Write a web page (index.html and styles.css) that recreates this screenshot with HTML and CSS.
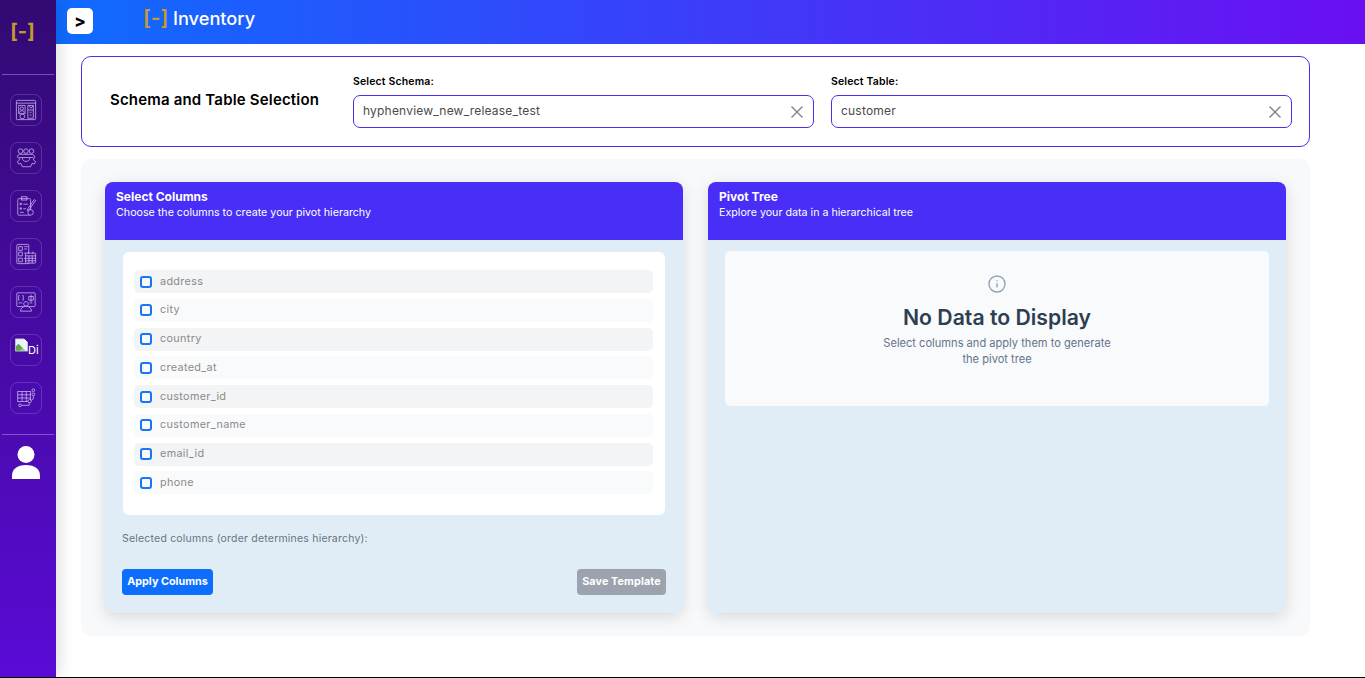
FILE: index.html
```html
<!DOCTYPE html>
<html lang="en">
<head>
    <meta charset="UTF-8">
    <meta name="viewport" content="width=device-width, initial-scale=1.0">
    <title>Inventory</title>
    <link rel="stylesheet" href="styles.css">
</head>
<body>
    <aside class="sidebar">
        <div class="side-logo">[-]</div>
        <hr class="side-line">
        <nav class="side-nav">
            <a class="side-icon">
                <svg viewBox="0 0 24 24"><rect x="1.500" y="1.500" width="21" height="21" rx="1"/><path d="M1.500 4.500h21M4 7h7v9H4zM14 7h6v14h-6zM14 12h6M16 14.500h2M16 17.500h2M15 7l2.500 3L20 7M5 15c0-3 5-3 5 0"/><circle cx="7.500" cy="10.500" r="1.800"/><circle cx="8" cy="19" r="2.600"/></svg>
            </a>
            <a class="side-icon">
                <svg viewBox="0 0 24 24"><circle cx="6" cy="4.500" r="2.500"/><circle cx="12" cy="4.500" r="2.500"/><circle cx="18" cy="4.500" r="2.500"/><path d="M2.500 11.500c0-2.500 1.500-3.500 3.500-3.500h12c2 0 3.500 1 3.500 3.500M4 11.500h16M4 11.500l1 2.500-2.500 2 1.500 2.500 2.500-.5 1.500 3.500h9l1.500-3.500 2.500.5 1.500-2.500-2.500-2 1-2.500M8 12c0 5 8 5 8 0"/></svg>
            </a>
            <a class="side-icon">
                <svg viewBox="0 0 24 24"><rect x="3" y="4" width="14" height="18" rx="1"/><rect x="7" y="2" width="6" height="3.500"/><path d="M5.500 9h1.500v1.500H5.500zM5.500 14h1.500v1.500H5.500zM9 10h5M9 15h3M5.500 19h4M14 15l7-10 1.500 1-7 10-2 1z"/><circle cx="17" cy="19" r="3" class="fill"/></svg>
            </a>
            <a class="side-icon">
                <svg viewBox="0 0 24 24"><rect x="2" y="1.500" width="13" height="21" rx="1"/><path d="M4 4h4v4H4zM4 10h4v4H4zM4 16.500h4v4H4zM10 4h4M10 6.500h3M10 11h2M10 17h2"/><rect x="11.500" y="11" width="11" height="11" rx="1" class="fill"/><path d="M11.500 14h11M11.500 16.700h11M11.500 19.300h11M15.200 14v8M18.800 14v8M14.500 9.500v2.500M19.500 9.500v2.500"/></svg>
            </a>
            <a class="side-icon">
                <svg viewBox="0 0 24 24"><rect x="2" y="2" width="20" height="15" rx="1"/><path d="M5 5H4v5h1M8 5h1v5H8M15 6h5v4h-5zM17.500 4v8M4 13h4M16 13h3"/><circle cx="12" cy="14" r="2.500" class="fill"/><path d="M6 22c0-7 12-7 12 0z" class="fill"/></svg>
            </a>
            <a class="side-icon side-broken">
                <svg class="broken" viewBox="0 0 15 15"><path class="sheet" d="M.5.500h10l4 4v10H.5z"/><path class="fold" d="M10.500.500l4 4h-4z"/><path class="hill" d="M1 14V9l3-3 5 5-3 3z"/><path class="hill-soft" d="M6 14l3-3 3 3z"/></svg>
                <span class="broken-alt">Di</span>
            </a>
            <a class="side-icon">
                <svg viewBox="0 0 24 24"><rect x="3" y="5" width="14" height="11"/><path d="M3 8.500h14M3 12h14M7.700 5v11M12.300 5v11M15.500 17v3H7"/><circle cx="20" cy="3.500" r="1.500"/><circle cx="20" cy="8" r="1.500"/><circle cx="16" cy="15.500" r="1.800" class="fill"/><circle cx="5.500" cy="20" r="1.500"/><path d="M20 9.500v3.500l-2.500 1.500"/></svg>
            </a>
        </nav>
        <hr class="side-line">
        <svg class="side-user" viewBox="0 0 28 33"><circle cx="14" cy="8.500" r="8.500"/><path d="M0 33v-3c0-7 5-11 14-11s14 4 14 11v3z"/></svg>
    </aside>

    <div class="main">
        <header class="topbar">
            <button class="toggle">&gt;</button>
            <div class="brand"><span class="brand-mark">[-]</span>Inventory</div>
        </header>

        <div class="content">
            <section class="selection">
                <h2>Schema and Table Selection</h2>
                <div class="field field-schema">
                    <label>Select Schema:</label>
                    <div class="select-box">
                        <span>hyphenview_new_release_test</span>
                        <svg class="clear" viewBox="0 0 12 12"><path d="M.5.500l11 11M11.500.500l-11 11"/></svg>
                    </div>
                </div>
                <div class="field">
                    <label>Select Table:</label>
                    <div class="select-box">
                        <span>customer</span>
                        <svg class="clear" viewBox="0 0 12 12"><path d="M.5.500l11 11M11.500.500l-11 11"/></svg>
                    </div>
                </div>
            </section>

            <section class="panels">
                <div class="card">
                    <div class="card-head">
                        <h3>Select Columns</h3>
                        <p>Choose the columns to create your pivot hierarchy</p>
                    </div>
                    <div class="card-body">
                        <div class="col-list">
                            <div class="col-item"><span class="check"></span>address</div>
                            <div class="col-item"><span class="check"></span>city</div>
                            <div class="col-item"><span class="check"></span>country</div>
                            <div class="col-item"><span class="check"></span>created_at</div>
                            <div class="col-item"><span class="check"></span>customer_id</div>
                            <div class="col-item"><span class="check"></span>customer_name</div>
                            <div class="col-item"><span class="check"></span>email_id</div>
                            <div class="col-item"><span class="check"></span>phone</div>
                        </div>
                        <p class="selected-note">Selected columns (order determines hierarchy):</p>
                        <div class="actions">
                            <button class="btn btn-apply">Apply Columns</button>
                            <button class="btn btn-save">Save Template</button>
                        </div>
                    </div>
                </div>

                <div class="card">
                    <div class="card-head">
                        <h3>Pivot Tree</h3>
                        <p>Explore your data in a hierarchical tree</p>
                    </div>
                    <div class="card-body card-body-tree">
                        <div class="empty">
                            <svg class="empty-icon" viewBox="0 0 18 18"><circle cx="9" cy="9" r="8"/><path d="M9 8.200v4.300M9 5.300v1"/></svg>
                            <h4>No Data to Display</h4>
                            <p>Select columns and apply them to generate<br>the pivot tree</p>
                        </div>
                    </div>
                </div>
            </section>
        </div>
    </div>
</body>
</html>
```
FILE: styles.css
```css
* {
    box-sizing: border-box;
}
html, body {
    height: 100%;
}
body {
    margin: 0;
    font-family: Inter, "Liberation Sans", sans-serif;
    background-color: #fff;
    display: flex;
    height: 678px;
    overflow: hidden;
    border-bottom: 1px solid #000;
}

/* sidebar */
.sidebar {
    width: 56px;
    flex: none;
    background: linear-gradient(180deg, #320a72 0%, #5a0bd6 100%);
    box-shadow: 4px 0 14px rgba(0, 0, 0, 0.12);
    display: flex;
    flex-direction: column;
    align-items: center;
    padding-top: 18px;
    position: relative;
    z-index: 2;
}
.side-logo {
    color: #c39a2e;
    font-size: 20px;
    font-weight: 700;
    line-height: 26px;
    height: 26px;
    margin-right: 11px;
}
.side-line {
    width: 52px;
    height: 1px;
    margin: 0;
    border: 0;
    background-color: rgba(255, 255, 255, 0.3);
    flex: none;
}
.sidebar > .side-line:first-of-type {
    margin-top: 30px;
}
.side-nav {
    display: flex;
    flex-direction: column;
    gap: 16px;
    padding: 19px 0 20px;
    margin-right: 4px;
}
.side-icon {
    width: 32px;
    height: 32px;
    border: 1px solid rgba(255, 255, 255, 0.16);
    border-radius: 8px;
    display: flex;
    align-items: center;
    justify-content: center;
    overflow: hidden;
}
.side-icon svg {
    width: 22px;
    height: 22px;
    fill: none;
    stroke: #d2c1f0;
    stroke-width: 0.8;
}
.side-icon svg .fill {
    fill: #44099c;
}
.side-broken {
    justify-content: flex-start;
    align-items: flex-start;
    padding: 3px 0 0 4px;
}
.side-icon svg.broken {
    width: 13px;
    height: 14px;
    flex: none;
    stroke: none;
}
.broken .sheet {
    fill: #eef3fb;
    stroke: #c4c8d2;
    stroke-width: 1;
}
.broken .fold {
    fill: #fff;
}
.broken .hill {
    fill: #5aa84c;
}
.broken .hill-soft {
    fill: #8fc47e;
}
.broken-alt {
    color: #fff;
    font-size: 11px;
    line-height: 13px;
    margin-top: 6px;
}
.side-user {
    width: 28px;
    height: 33px;
    margin: 11px 4px 0 0;
    fill: #fff;
}

/* top bar */
.main {
    flex: 1;
    min-width: 0;
}
.topbar {
    height: 44px;
    background: linear-gradient(90deg, #0f6bff 0%, #6a0ff2 100%);
    display: flex;
    padding: 8px 0 0 11px;
}
.toggle {
    width: 26px;
    height: 26px;
    border: none;
    border-radius: 5px;
    background-color: #fff;
    color: #000;
    font-family: Inter, sans-serif;
    font-size: 17px;
    font-weight: 800;
    padding: 0;
}
.brand {
    margin: -2px 0 0 50px;
    color: #fff;
    font-size: 18.200px;
    font-weight: 500;
    line-height: 24px;
    display: flex;
    align-items: center;
    height: 24px;
}
.brand-mark {
    width: 30px;
    color: #c39a2e;
    font-size: 21px;
    font-weight: 600;
}

/* selection box */
.content {
    padding: 12px 55px 0 25px;
}
.selection {
    height: 91px;
    border: 1px solid #4a2ff0;
    border-radius: 10px;
    display: flex;
    padding: 17px 17px 0 28px;
}
.selection h2 {
    width: 243px;
    flex: none;
    margin: 16px 0 0;
    font-size: 15px;
    font-weight: 600;
    line-height: 20px;
    color: #000;
    letter-spacing: 0.18px;
}
.field {
    width: 461px;
}
.field-schema {
    margin-right: 17px;
}
.field label {
    display: block;
    font-size: 10.500px;
    font-weight: 600;
    line-height: 16px;
    color: #000;
    letter-spacing: 0.15px;
    margin-bottom: 5px;
}
.select-box {
    height: 33px;
    border: 1px solid #4a2ff0;
    border-radius: 7px;
    display: flex;
    align-items: center;
    justify-content: space-between;
    padding: 0 10px 2px 9px;
    font-size: 12px;
    letter-spacing: 0.2px;
    color: #4a4a4a;
}
.clear {
    width: 12px;
    height: 12px;
    margin-top: 2px;
    fill: none;
    stroke: #808080;
    stroke-width: 1.300;
}

/* panels */
.panels {
    margin-top: 12px;
    height: 477px;
    padding: 23px 24px;
    background-color: #f8f9fb;
    border-radius: 10px;
    display: flex;
    gap: 25px;
}
.card {
    flex: 1;
    border-radius: 8px;
    overflow: hidden;
    background-color: #e1edf6;
    box-shadow: 0 4px 16px rgba(0, 0, 0, 0.13);
    display: flex;
    flex-direction: column;
}
.card-head {
    height: 58px;
    flex: none;
    background-color: #482ef7;
    color: #fff;
    padding: 7px 11px;
}
.card-head h3 {
    margin: 0;
    font-size: 12px;
    font-weight: 700;
    line-height: 16px;
}
.card-head p {
    margin: 0;
    font-size: 10.700px;
    line-height: 15px;
}
.card-body {
    flex: 1;
    padding: 12px 17px 18px;
    display: flex;
    flex-direction: column;
}
.col-list {
    height: 263px;
    margin: 0 1px;
    padding: 18px 12px 0 11px;
    background-color: #fff;
    border-radius: 6px;
    display: flex;
    flex-direction: column;
    gap: 5.750px;
}
.col-item {
    height: 23px;
    flex: none;
    display: flex;
    align-items: center;
    padding: 0 0 1px 6px;
    border-radius: 5px;
    background-color: #f9fafb;
    font-size: 10.800px;
    color: #8a8a8a;
    letter-spacing: 0.35px;
}
.col-item:nth-child(odd) {
    background-color: #f3f4f6;
}
.check {
    width: 12px;
    height: 12px;
    flex: none;
    margin: 1px 8px 0 0;
    border: 2px solid #1a75f5;
    border-radius: 3px;
    background-color: #f8fafc;
}
.selected-note {
    margin: 16px 0 0;
    font-size: 10.500px;
    line-height: 15px;
    color: #6b7280;
    letter-spacing: 0.2px;
}
.actions {
    margin-top: auto;
    display: flex;
    justify-content: space-between;
}
.btn {
    height: 26px;
    border: none;
    border-radius: 4px;
    color: #fff;
    font-family: Inter, sans-serif;
    font-size: 10.800px;
    font-weight: 700;
    padding: 0 0 2px;
}
.btn-apply {
    width: 91px;
    background-color: #0d6efd;
}
.btn-save {
    width: 89px;
    background-color: #9ca3af;
    letter-spacing: 0.1px;
}
.card-body-tree {
    padding: 11px 17px 0;
}
.empty {
    height: 155px;
    background-color: #f8fafc;
    border-radius: 5px;
    text-align: center;
    padding-top: 24px;
}
.empty-icon {
    display: block;
    width: 18px;
    height: 18px;
    margin: 0 auto;
    fill: none;
    stroke: #94a3b8;
    stroke-width: 1.400;
}
.empty h4 {
    margin: 9px 0 0;
    font-size: 21.200px;
    font-weight: 600;
    line-height: 30px;
    color: #2d3e50;
}
.empty p {
    margin: 3px 0 0;
    font-size: 11.100px;
    line-height: 16px;
    color: #64748b;
}
```
